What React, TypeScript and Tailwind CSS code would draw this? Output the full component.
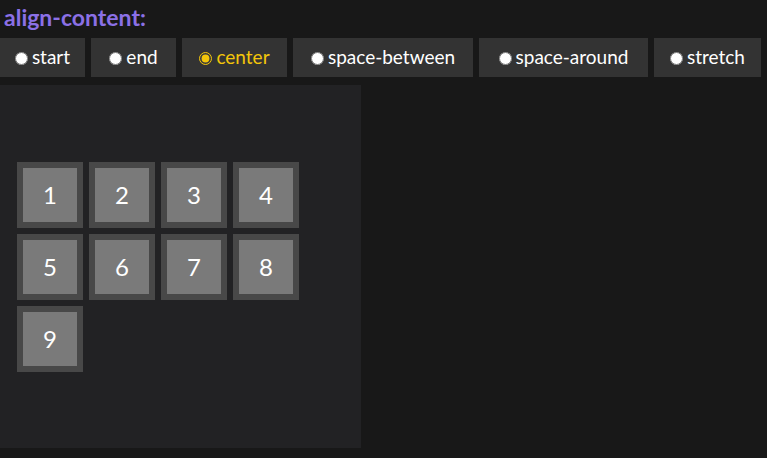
const options = [
  { label: "start", w: "w-[85px]" },
  { label: "end", w: "w-[85px]" },
  { label: "center", w: "w-[105px]" },
  { label: "space-between", w: "w-[180px]" },
  { label: "space-around", w: "w-[169px]" },
  { label: "stretch", w: "w-[107px]" },
];

const items = [1, 2, 3, 4, 5, 6, 7, 8, 9];

export default function App() {
  const selected = "center";

  return (
    <div className="w-[767px] h-[458px] overflow-hidden bg-[#181818] font-['Lato','Open_Sans',sans-serif]">
      {/* Title */}
      <h1 className="pl-[4px] pt-[2px] h-[38px] text-[23px] font-bold leading-[30px] text-[#8b70e6]">
        align-content:
      </h1>

      {/* Option buttons */}
      <div className="flex gap-[6px] h-[39px]">
        {options.map((opt) => {
          const active = opt.label === selected;
          return (
            <label
              key={opt.label}
              className={`${opt.w} shrink-0 flex items-center justify-center bg-[#333333] text-[19px] ${
                active ? "text-[#f3c60a]" : "text-white"
              }`}
            >
              <input
                type="radio"
                name="align"
                readOnly
                checked={active}
                className="w-[13px] h-[13px] mr-[4px] mt-[1px] accent-[#f3c60a]"
              />
              {opt.label}
            </label>
          );
        })}
      </div>

      {/* Demo panel */}
      <div className="mt-[8px] w-[361px] h-[363px] p-[14px] bg-[#222224] flex flex-wrap content-center">
        {items.map((n) => (
          <div
            key={n}
            className="m-[3px] w-[66px] h-[66px] border-[6px] border-[#484848] bg-[#7a7a7a] flex items-center justify-center text-white text-[24px]"
          >
            {n}
          </div>
        ))}
      </div>
    </div>
  );
}
